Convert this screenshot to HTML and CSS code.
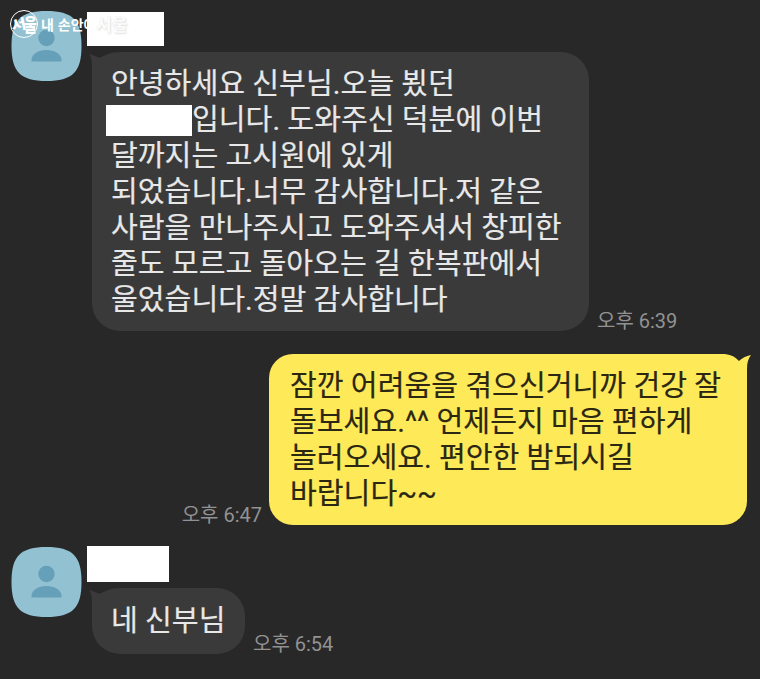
FILE: index.html
```html
<!DOCTYPE html>
<html lang="ko">
<head>
<meta charset="utf-8">
<title>채팅</title>
<link rel="stylesheet" href="styles.css">
</head>
<body>
<main class="chat">
  <section class="row incoming first">
    <svg class="avatar" viewBox="0 0 70 70"><path class="tile" d="M35 0C61 0 70 9 70 35S61 70 35 70 0 61 0 35 9 0 35 0Z"/><circle class="person" cx="35" cy="27" r="8.2"/><path class="person" d="M20 50.5V49c0-6 7-10 15-10s15 4 15 10v1.5Z"/></svg>
    <div class="content">
      <div class="name"></div>
      <div class="message">
        <div class="bubble long">
          <svg class="tail" viewBox="0 0 24 30"><path d="M0 2C5 3 8 5 10 6L24 0V30H3V18C3 10 3 6 0 2Z"/></svg>
          <p>안녕하세요 신부님.오늘 뵜던</p>
          <p class="masked"><span class="mask"></span>입니다. 도와주신 덕분에 이번</p>
          <p>달까지는 고시원에 있게</p>
          <p>되었습니다.너무 감사합니다.저 같은</p>
          <p>사람을 만나주시고 도와주셔서 창피한</p>
          <p>줄도 모르고 돌아오는 길 한복판에서</p>
          <p>울었습니다.정말 감사합니다</p>
        </div>
        <time>오후 6:39</time>
      </div>
    </div>
  </section>
  <section class="row outgoing">
    <time>오후 6:47</time>
    <div class="bubble yellow">
      <svg class="tail-right" viewBox="0 0 40 36"><path d="M0 0H11C19 0 23 2 28 7C31 4 35 2 40 1C37 5 36 9 36 15V36H0Z"/></svg>
      <p>잠깐 어려움을 겪으신거니까 건강 잘</p>
      <p>돌보세요.^^ 언제든지 마음 편하게</p>
      <p>놀러오세요. 편안한 밤되시길</p>
      <p>바랍니다~~</p>
    </div>
  </section>
  <section class="row incoming last">
    <svg class="avatar" viewBox="0 0 70 70"><path class="tile" d="M35 0C61 0 70 9 70 35S61 70 35 70 0 61 0 35 9 0 35 0Z"/><circle class="person" cx="35" cy="27" r="8.2"/><path class="person" d="M20 50.5V49c0-6 7-10 15-10s15 4 15 10v1.5Z"/></svg>
    <div class="content">
      <div class="name"></div>
      <div class="message">
        <div class="bubble short">
          <svg class="tail" viewBox="0 0 24 30"><path d="M0 2C5 3 8 5 10 6L24 0V30H3V18C3 10 3 6 0 2Z"/></svg>
          <p>네 신부님</p>
        </div>
        <time>오후 6:54</time>
      </div>
    </div>
  </section>
  <div class="watermark">
    <span class="seal"><b>서</b><b>울</b></span>
    <span class="site">내 손안에</span><span class="city">서울</span>
  </div>
</main>
</body>
</html>
```
FILE: styles.css
```css
* { box-sizing: border-box; }
body {
  margin: 0;
  background: #282828;
  font-family: Roboto, "Noto Sans CJK KR", sans-serif;
}
.chat {
  position: relative;
  width: 760px;
  height: 679px;
  overflow: hidden;
  padding: 11px 13px 0 11px;
}
.row { display: flex; }
.avatar { width: 71px; height: 70px; flex: none; }
.tile { fill: #92c1d2; }
.person { fill: #669fb8; }
.content { margin-left: 5px; }
.name { background: #fff; width: 77px; height: 34px; margin-top: 1px; }
.message { display: flex; align-items: flex-end; margin: 6px 0 0 5px; }
.bubble {
  position: relative;
  background: #3a3a3a;
  color: #e8e8e8;
  border-radius: 28px;
  padding: 14px 19px 13px;
  font-size: 29.15px;
  line-height: 36px;
  -webkit-text-stroke: 0.2px currentColor;
}
.bubble p { margin: 0; white-space: nowrap; position: relative; }
.long { width: 497px; height: 279px; }
.masked { display: flex; }
.mask { width: 86px; height: 31px; background: #fff; margin: 3px 0 0 -5px; }
.tail { position: absolute; left: -3px; top: 0; width: 24px; height: 30px; fill: #3a3a3a; }
.tail-right { position: absolute; right: -4px; top: 0; width: 40px; height: 36px; fill: #feea59; }
time { color: #929292; font-size: 20px; line-height: 20px; margin-left: 8px; }
.outgoing { justify-content: flex-end; align-items: flex-end; margin-top: 23px; }
.outgoing time { margin: 0 7px 0 0; }
.yellow {
  background: linear-gradient(#feea59, #feea59) 0 0 / 442px 100% no-repeat, linear-gradient(#feea59, #feea59) 0 36px no-repeat;
  color: #2b2713;
  width: 478px;
  height: 171px;
  padding: 14px 21px 13px;
  border-radius: 24px;
}
.last { margin-top: 21px; }
.last .avatar { margin-top: 1px; }
.last .name { width: 82px; height: 36px; margin-top: 0; }
.short { width: 153px; height: 66px; padding-top: 15px; }
.watermark {
  position: absolute;
  left: 10px;
  top: 10px;
  display: flex;
  align-items: center;
  height: 28px;
  color: #fff;
  font-family: "Noto Sans CJK KR", sans-serif;
  font-weight: 700;
  line-height: 26px;
}
.seal {
  width: 28px;
  height: 28px;
  border: 1px solid #fff;
  border-radius: 50%;
  display: flex;
  align-items: center;
  justify-content: center;
  font-size: 14px;
  letter-spacing: -1px;
  flex: none;
}
.seal b:first-child { transform: rotate(-12deg) scaleX(1.15); }
.seal b:last-child { transform: scaleY(1.3); }
.site { width: 55px; margin-left: 3px; font-size: 14px; white-space: nowrap; }
.city { font-size: 17px; line-height: 24px; text-shadow: 1px 1px 2px #ddd; -webkit-text-stroke: 0.3px #eee; }
```
